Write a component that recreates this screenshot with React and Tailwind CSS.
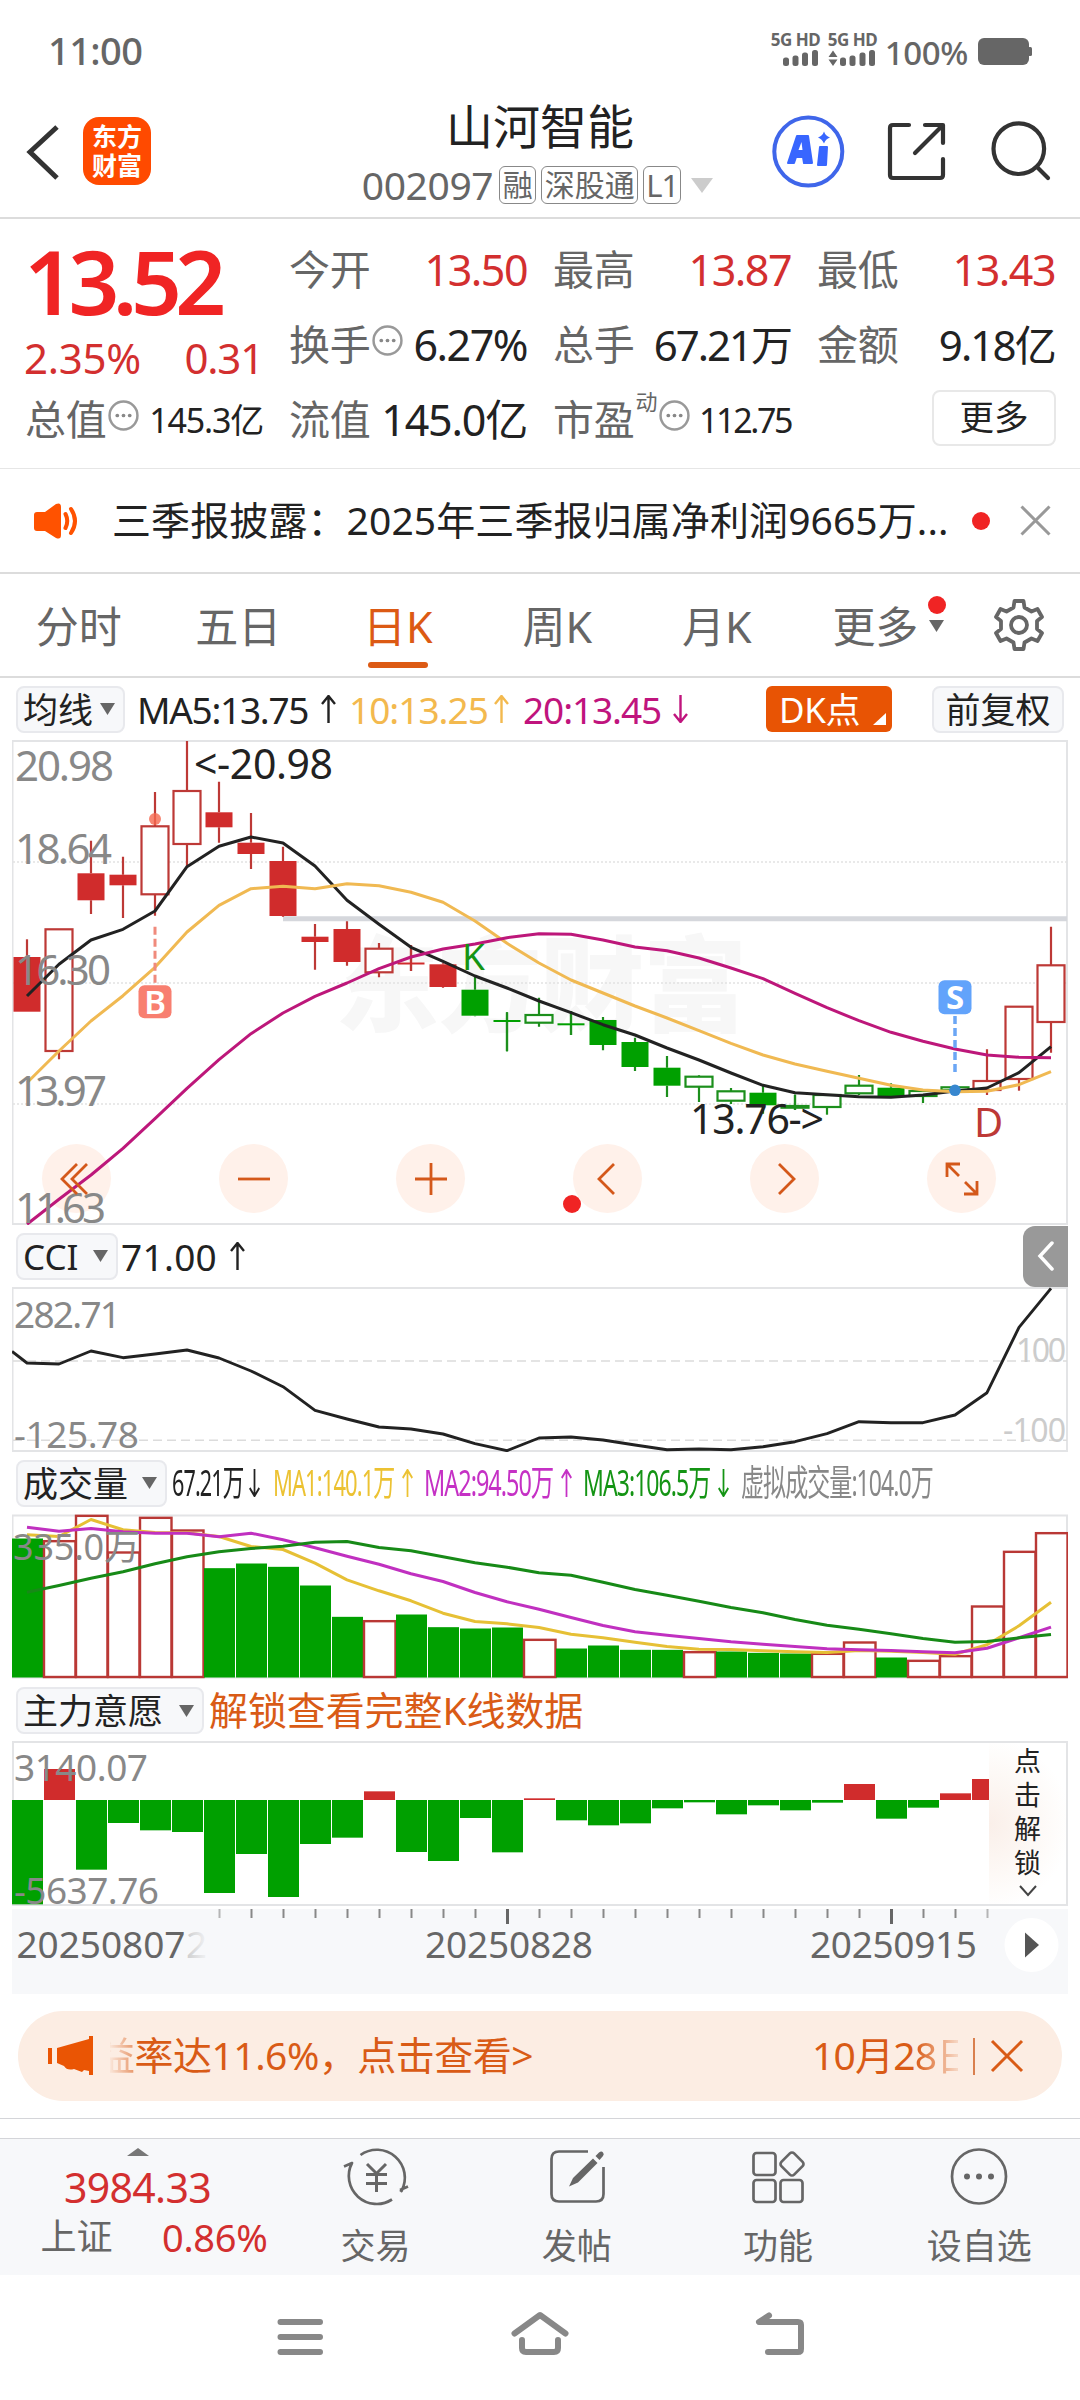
import React from 'react';

// Every chart shares one time axis: 33 trading days, 32px apart
const dayX = (i) => 27 + i * 32;

// [type, body top, body bottom, high, low]
// R = solid red, r = hollow red, G = solid green, g = hollow green
const candles = [
  ['R', 957, 1011.7, 939.3, 1011.7],
  ['r', 929.3, 1051, 929.3, 1059.3],
  ['R', 873.3, 900.3, 840.7, 914],
  ['R', 874.7, 885.3, 856.7, 918],
  ['r', 826.3, 894.3, 792, 915.7],
  ['r', 791, 844, 741, 866],
  ['R', 812.3, 827.3, 781.7, 842.7],
  ['R', 842.7, 854, 813, 869],
  ['R', 861, 916, 846.7, 916.7],
  ['R', 936.7, 942, 924, 969.7],
  ['R', 929, 962, 921.3, 965.7],
  ['r', 948.7, 972.3, 943, 977.3],
  ['R', 962.5, 964.5, 945, 971],
  ['R', 964.3, 987, 963.3, 987.7],
  ['G', 989.7, 1015.7, 975, 1016.3],
  ['G', 1020, 1022, 1012.3, 1051.3],
  ['g', 1015, 1022.7, 997.7, 1026.7],
  ['G', 1023.3, 1025.3, 1011, 1035],
  ['G', 1020, 1045, 1017, 1050.3],
  ['G', 1042, 1067, 1037.7, 1071],
  ['G', 1067.7, 1085.7, 1056, 1097],
  ['g', 1076.7, 1086.7, 1075.3, 1102],
  ['g', 1091.3, 1100.7, 1088, 1104],
  ['G', 1092.7, 1105.3, 1086, 1113.7],
  ['g', 1106, 1107.7, 1094.7, 1110],
  ['g', 1095, 1107, 1095, 1114.7],
  ['g', 1085.7, 1093.3, 1075, 1095],
  ['G', 1087.7, 1096, 1083.3, 1096.7],
  ['g', 1091, 1096, 1091, 1103],
  ['g', 1087.3, 1090.3, 1086.7, 1091],
  ['r', 1081, 1090, 1049.3, 1095],
  ['r', 1006.7, 1079, 1006.7, 1090.7],
  ['r', 965.3, 1022, 926.7, 1052.7],
];

const ma5 = [798, 703, 630, 598, 543, 410, 349, 321, 339, 408, 511, 583, 652, 694, 738, 774, 813, 848, 884, 915, 954, 990, 1029, 1066, 1088, 1094, 1100, 1102, 1095, 1083, 1074, 1028, 950];
const ma10 = [1058, 963, 873, 797, 712, 606, 526, 476, 469, 476, 461, 467, 487, 517, 573, 640, 699, 750, 789, 828, 864, 902, 940, 975, 1002, 1024, 1045, 1066, 1080, 1085, 1084, 1064, 1025];
const ma20 = [1483, 1408, 1335, 1255, 1166, 1075, 989, 911, 849, 799, 759, 716, 681, 657, 642, 623, 611, 613, 630, 651, 662, 684, 714, 746, 790, 833, 872, 907, 934, 957, 975, 982, 983];

const cci = [429, 432, 393, 413, 402, 390, 414, 453, 500, 571, 597, 621, 627, 642, 671, 692, 654, 651, 660, 675, 689, 687, 689, 680, 665, 641, 605, 608, 608, 585, 518, 322, 205];

const volumes = [
  ['g', 114], ['r', 122], ['r', 46], ['r', 156], ['r', 52], ['r', 90], ['g', 203], ['g', 189], ['g', 199], ['g', 255], ['g', 349],
  ['r', 362], ['g', 342], ['g', 380], ['g', 384], ['g', 381], ['r', 418], ['g', 444], ['g', 435], ['g', 448], ['g', 448], ['r', 455],
  ['g', 453], ['g', 457], ['g', 459], ['r', 460], ['r', 426], ['g', 471], ['r', 481], ['r', 467], ['r', 318], ['r', 154], ['r', 98],
];
const volMa1 = [103, 108, 57, 88, 96, 97, 108, 138, 147, 188, 238, 271, 301, 338, 363, 370, 381, 401, 412, 425, 438, 446, 447, 451, 454, 456, 450, 452, 456, 461, 433, 376, 305];
const volMa2 = [80, 92, 84, 94, 98, 98, 109, 98, 118, 142, 167, 191, 220, 243, 276, 304, 326, 351, 375, 394, 404, 414, 424, 431, 438, 445, 448, 450, 454, 457, 443, 412, 380];
const volMa3 = [275, 255, 233, 214, 190, 169, 154, 144, 137, 125, 123, 141, 151, 169, 187, 200, 217, 224, 245, 267, 284, 302, 321, 337, 357, 374, 386, 400, 414, 425, 423, 412, 402];

const intent = [523, 117, 419, 279, 301, 306, 489, 372, 501, 342, 323, 184, 366, 393, 264, 367, 205, 271, 286, 280, 235, 217, 253, 226, 241, 218, 162, 266, 233, 190, 147];

const toPoints = (values, base) => values.map((v, i) => `${dayX(i)},${(base + v / 3).toFixed(1)}`).join(' ');

function Caret() {
  return (
    <svg className="w-[15px] h-[12px] shrink-0" viewBox="0 0 15 12">
      <path d="M0 0H15L7.5 12Z" fill="#666" />
    </svg>
  );
}

function Arrow({ down, narrow }) {
  return (
    <svg className={narrow ? 'w-[11px] h-[28px] shrink-0' : 'w-[15px] h-[28px] shrink-0'} viewBox="0 0 15 28" preserveAspectRatio="none">
      <path
        d={down ? 'M7.5 0V27M1 19L7.5 27L14 19' : 'M7.5 28V1M1 9L7.5 1L14 9'}
        fill="none"
        stroke="currentColor"
        strokeWidth="2.4"
      />
    </svg>
  );
}

function Picker({ label, className }) {
  return (
    <div className={`h-[47px] shrink-0 flex items-center justify-between pl-[5px] pr-[8px] rounded-lg border-2 border-[#e8e9ed] bg-[#f7f8fa] text-[#222] text-[35px] leading-none whitespace-nowrap ${className}`}>
      <span>{label}</span>
      <Caret />
    </div>
  );
}

function Dots() {
  return (
    <svg className="w-[31px] h-[31px] shrink-0" viewBox="0 0 30 30">
      <circle cx="15" cy="15" r="13.5" fill="none" stroke="#999" strokeWidth="2.4" />
      <circle cx="9" cy="15" r="1.8" fill="#888" />
      <circle cx="15" cy="15" r="1.8" fill="#888" />
      <circle cx="21" cy="15" r="1.8" fill="#888" />
    </svg>
  );
}

function StatusBar() {
  return (
    <div className="h-[86px] pl-[48px] pr-[47px] pt-[14px] flex items-center justify-between text-[#666]">
      <span className="text-[38px] font-medium leading-none tracking-[-0.6px]">11:00</span>
      <div className="flex items-center">
        <div className="flex flex-col items-start gap-[4px]">
          <div className="flex gap-[9px] text-[17px] leading-[13px] font-bold tracking-[-0.5px]">
            <span className="w-[48px] whitespace-nowrap">5G HD</span>
            <span className="w-[48px] whitespace-nowrap">5G HD</span>
          </div>
          <svg className="w-[105px] h-[17px]" viewBox="771 51 105 17" fill="#666">
            <rect x="783" y="58.500" width="6" height="8.500" rx="2.500" />
            <rect x="792.500" y="56.500" width="6" height="10.500" rx="2.500" />
            <rect x="802" y="53.500" width="6" height="13.500" rx="2.500" />
            <rect x="812" y="51" width="6" height="16" rx="2.500" />
            <path d="M828.500 58L833 51.500L837.500 58ZM828.500 60.500L833 67L837.500 60.500Z" />
            <rect x="840" y="58.500" width="6" height="8.500" rx="2.500" />
            <rect x="849.500" y="56.500" width="6" height="10.500" rx="2.500" />
            <rect x="859.500" y="53.500" width="6" height="13.500" rx="2.500" />
            <rect x="869" y="51" width="6" height="16" rx="2.500" />
          </svg>
        </div>
        <span className="ml-[9px] mt-[4px] text-[33px] font-medium leading-none tracking-[-0.4px]">100%</span>
        <svg className="ml-[10px] mt-[3px] w-[55px] h-[27px]" viewBox="0 0 55 27">
          <rect width="51" height="27" rx="6" fill="#666" />
          <rect x="50" y="9" width="4" height="9" rx="1.500" fill="#666" />
        </svg>
      </div>
    </div>
  );
}

function Header() {
  return (
    <div className="h-[133px] border-b-2 border-[#dcdcdc] flex">
      <div className="w-[340px] pl-[26px] pt-[31px] flex">
        <svg className="w-[34px] h-[56px] mt-[7px]" viewBox="0 0 34 56">
          <path d="M31 3L4 28L31 54" fill="none" stroke="#333" strokeWidth="5" />
        </svg>
        <div className="ml-[23px] size-[68px] rounded-2xl bg-[#ff4a00] text-white text-[25px] font-bold leading-[29px] flex flex-col items-center justify-center">
          <span>东方</span>
          <span>财富</span>
        </div>
      </div>
      <div className="w-[400px] flex flex-col items-center">
        <h1 className="mt-[15px] text-[47px] leading-[50px] text-[#222]">山河智能</h1>
        <div className="mt-[15px] mr-[5px] h-[38px] flex items-center text-[#666]">
          <span className="-mt-[2px] text-[39px] leading-none tracking-[-0.4px]">002097</span>
          <span className="ml-[6px] h-[38px] w-[37px] rounded-md border-[1.5px] border-[#888] text-[30px] leading-none flex items-center justify-center">融</span>
          <span className="ml-[5px] h-[38px] w-[97px] rounded-md border-[1.5px] border-[#888] text-[30px] leading-none flex items-center justify-center">深股通</span>
          <span className="ml-[5px] h-[38px] w-[38px] rounded-md border-[1.5px] border-[#888] text-[31px] leading-none tracking-[-1px] flex items-center justify-center">L1</span>
          <svg className="ml-[10px] w-[22px] h-[15px]" viewBox="0 0 22 15">
            <path d="M0 0H22L11 15Z" fill="#ccc" />
          </svg>
        </div>
      </div>
      <svg className="w-[340px] h-[120px]" viewBox="740 86 340 120" fill="none">
        <circle cx="808.300" cy="151.600" r="34" stroke="#3f66ea" strokeWidth="4" />
        <path d="M788 163L797 136H808L812 163H804L803 157H796L794 163Z" fill="#3866ff" stroke="#3866ff" strokeWidth="2" strokeLinejoin="round" />
        <path d="M798.500 150H802.500L801.500 142Z" fill="#fff" />
        <path d="M820 147H827L826 165H818Z" fill="#3866ff" stroke="#3866ff" strokeWidth="2" strokeLinejoin="round" />
        <path d="M824 131.500Q825.500 136 830 137.500Q825.500 139 824 143.500Q822 139 818 137.500Q822.500 136 824 131.500Z" fill="#3866ff" />
        <g stroke="#333" strokeWidth="4.200" strokeLinecap="round" strokeLinejoin="round">
          <path d="M909 125H893Q890 125 890 128V175Q890 178 893 178H940Q943 178 943 175V159" />
          <path d="M925 125H943V143M942 126L915 153" />
          <circle cx="1018.800" cy="148.700" r="25.300" />
          <path d="M1037 167L1048 178" />
        </g>
      </svg>
    </div>
  );
}

function Stat({ label, mark, dots, value, valueClass }) {
  return (
    <div className="h-[75px] flex items-center justify-between whitespace-nowrap">
      <div className="flex items-center text-[#666] text-[41px] leading-none tracking-[-0.3px]">
        <span>{label}</span>
        {mark && <span className="ml-[1px] -mt-[38px] text-[22px] leading-none">{mark}</span>}
        {dots && <span className="ml-[2px] -mt-[8px]"><Dots /></span>}
      </div>
      <span className={`leading-none ${valueClass}`}>{value}</span>
    </div>
  );
}

function Quote() {
  return (
    <div className="h-[250px] border-b border-[#e6e6e6] pt-[13px] pl-[25px] pr-[25px] flex justify-between">
      <div className="w-[238px]">
        <div className="h-[150px] text-[#f02424]">
          <div className="h-[92px] pt-[3px] text-[89px] leading-[92px] font-semibold tracking-[-6.5px] -ml-[1px]">13.52</div>
          <div className="flex justify-between mt-[11px] text-[42px] leading-[46px] text-[#d32f2f]">
            <span className="-ml-[1px] tracking-[-0.3px]">2.35%</span>
            <span className="tracking-[-1.2px]">0.31</span>
          </div>
        </div>
        <Stat label="总值" dots value="145.3亿" valueClass="text-[34px] tracking-[-1.2px] text-[#222]" />
      </div>
      <div className="w-[238px]">
        <Stat label="今开" value="13.50" valueClass="text-[43px] tracking-[-1.5px] text-[#d32f2f]" />
        <Stat label="换手" dots value="6.27%" valueClass="text-[43px] tracking-[-1.5px] text-[#222]" />
        <Stat label="流值" value="145.0亿" valueClass="text-[43px] tracking-[-1.2px] text-[#222]" />
      </div>
      <div className="w-[238px]">
        <Stat label="最高" value="13.87" valueClass="text-[43px] tracking-[-1.5px] text-[#d32f2f]" />
        <Stat label="总手" value="67.21万" valueClass="text-[42px] tracking-[-2px] text-[#222]" />
        <Stat label="市盈" mark="动" dots value="112.75" valueClass="text-[34px] tracking-[-2.4px] text-[#222]" />
      </div>
      <div className="w-[238px]">
        <Stat label="最低" value="13.43" valueClass="text-[43px] tracking-[-1.5px] text-[#d32f2f]" />
        <Stat label="金额" value="9.18亿" valueClass="text-[42px] tracking-[-1.8px] text-[#222]" />
        <div className="h-[75px] flex items-center justify-end">
          <button className="-mt-[4px] -mr-[1px] w-[124px] h-[56px] rounded-lg border-2 border-[#e8e8e8] text-[34.5px] leading-none text-[#222]">更多</button>
        </div>
      </div>
    </div>
  );
}

function News() {
  return (
    <div className="h-[105px] border-b-2 border-[#dcdcdc] flex items-center">
      <svg className="ml-[33px] w-[46px] h-[38px]" viewBox="33 501 46 38">
        <path d="M34 514Q34 511 37 511H45L56 503Q61 501 61 506V534Q61 539 56 537L45 530H37Q34 530 34 527Z" fill="#ff5200" />
        <path d="M65.500 513Q69 520 65.500 527M71 508Q79 520 71 532" fill="none" stroke="#ff5200" strokeWidth="4" strokeLinecap="round" />
      </svg>
      <span className="ml-[33px] -mt-[2px] w-[836px] text-[39px] leading-none tracking-[0.1px] text-[#222] whitespace-nowrap">三季报披露：2025年三季报归属净利润9665万...</span>
      <span className="ml-[24px] size-[18px] rounded-full bg-[#f02424]" />
      <svg className="ml-[30px] w-[31px] h-[31px]" viewBox="0 0 31 31">
        <path d="M1.500 1.500L29.500 29.500M29.500 1.500L1.500 29.500" stroke="#999" strokeWidth="3" />
      </svg>
    </div>
  );
}

function Tabs() {
  const tabs = ['分时', '五日', '日K', '周K', '月K'];
  return (
    <div className="h-[104px] border-b-2 border-[#dcdcdc] flex text-[43px] leading-none text-[#666]">
      {tabs.map((tab) => (
        <div key={tab} className={`w-[159.5px] flex flex-col items-center pt-[31px] pr-[2px] ${tab === '日K' ? 'text-[#dc5a14]' : ''}`}>
          <span>{tab}</span>
          {tab === '日K' && <span className="mt-[14px] w-[60px] h-[6px] rounded-full bg-[#dc5a14]" />}
        </div>
      ))}
      <div className="w-[160px] pt-[31px] pl-[35px] flex items-start">
        <span className="tracking-[-0.3px]">更多</span>
        <div className="ml-[10px] -mt-[9px] flex flex-col items-center gap-[6px]">
          <span className="size-[18px] rounded-full bg-[#f02424]" />
          <Caret />
        </div>
      </div>
      <svg className="ml-[34px] mt-[24px] w-[54px] h-[54px]" viewBox="0 0 54 54" fill="none" stroke="#666" strokeWidth="3.800" strokeLinejoin="round">
        <path d="M22.500 3H31.500L32.500 9.500L39.500 13.500L45.500 11L50 19L45 23V31L50 35L45.500 43L39.500 40.500L32.500 44.500L31.500 51H22.500L21.500 44.500L14.500 40.500L8.500 43L4 35L9 31V23L4 19L8.500 11L14.500 13.500L21.500 9.500Z" />
        <circle cx="27" cy="27" r="8" />
      </svg>
    </div>
  );
}

function MaRow() {
  return (
    <div className="h-[62px] pl-[16px] pr-[16px] flex items-center text-[37px] leading-none whitespace-nowrap">
      <Picker label="均线" className="w-[109px]" />
      <div className="ml-[12px] w-[199px] flex items-center justify-between text-[#222]">
        <span className="tracking-[-1.3px]">MA5:13.75</span>
        <Arrow />
      </div>
      <div className="ml-[13px] w-[160px] flex items-center justify-between text-[#f3b94e]">
        <span className="tracking-[-1px]">10:13.25</span>
        <Arrow />
      </div>
      <div className="ml-[14px] w-[165px] flex items-center justify-between text-[#c0147d]">
        <span className="tracking-[-1.1px]">20:13.45</span>
        <Arrow down />
      </div>
      <div className="ml-auto w-[126px] h-[46px] rounded-md bg-[#e85404] text-white flex items-center pl-[13px]">
        <span className="text-[35px] tracking-[-0.3px]">DK点</span>
        <svg className="ml-auto mr-[6px] mt-[20px] w-[13px] h-[12px]" viewBox="0 0 13 12">
          <path d="M13 0V12H0Z" fill="#fff" />
        </svg>
      </div>
      <div className="ml-[40px] w-[132px] h-[47px] rounded-lg border-2 border-[#e8e9ed] bg-[#f7f8fa] text-[#222] text-[35px] flex items-center justify-center">前复权</div>
    </div>
  );
}

function Candle({ data, x }) {
  const [type, top, bottom, high, low] = data;
  const solid = type === 'R' || type === 'G';
  const red = type === 'R' || type === 'r';
  const line = red ? '#bd3936' : '#1c8f1c';
  return (
    <g>
      <path d={`M${x} ${high}V${top}M${x} ${bottom}V${low}`} stroke={line} strokeWidth="2.2" />
      {bottom - top < 2.5 && <path d={`M${x} ${high}V${low}`} stroke={line} strokeWidth="2.2" />}
      {solid ? (
        <rect x={x - 13.5} y={top} width="27" height={bottom - top} fill={red ? '#d02c2c' : '#00a000'} />
      ) : (
        <rect x={x - 13.5} y={top} width="27" height={bottom - top} fill="#fff" stroke={line} strokeWidth="2.2" />
      )}
    </g>
  );
}

function RoundButton({ children }) {
  return (
    <button className="size-[69px] rounded-full flex items-center justify-center">
      <svg className="w-[40px] h-[40px]" viewBox="0 0 40 40" fill="none" stroke="#d4581a" strokeWidth="2.8">
        {children}
      </svg>
    </button>
  );
}

function PriceChart() {
  const labels = [['20.98', 780.7, 99], ['18.64', 864, 97], ['16.30', 985, 96], ['13.97', 1105.7, 92], ['11.63', 1222.7, 91]];
  return (
    <div className="relative h-[485px] w-[1056px] mx-[12px]">
      <svg className="w-[1056px] h-[485px]" viewBox="12 740 1056 485">
        <rect x="12.500" y="741" width="1054.500" height="483" fill="none" stroke="#e3e4e6" strokeWidth="2" />
        <text x="335" y="1024" fontSize="104" fontWeight="900" fill="#f7f7f7" textLength="412">东方财富</text>
        {[862, 983, 1104].map((y) => (
          <path key={y} d={`M13 ${y}H1067`} stroke="#e2e2e2" strokeWidth="1.500" strokeDasharray="2 2" />
        ))}
        {/* Discs behind the six chart controls */}
        {[76.5, 253.5, 430.5, 607.5, 784.5, 961.5].map((x) => (
          <circle key={x} cx={x} cy="1178.500" r="34.500" fill="#fff1ea" />
        ))}
        <path d="M283 918.700H1067" stroke="#d5d7dc" strokeWidth="5" />
        {candles.map((c, i) => <Candle key={i} data={c} x={dayX(i)} />)}
        <g fill="none" strokeWidth="3" strokeLinejoin="round">
          <polyline points={toPoints(ma5, 730)} stroke="#222" />
          <polyline points={toPoints(ma10, 730)} stroke="#f0b952" />
          <polyline points={toPoints(ma20, 730)} stroke="#bd177a" />
        </g>
        <g fontSize="42" fill="#888">
          {labels.map(([text, y, w]) => <text key={text} x="15" y={y} textLength={w}>{text}</text>)}
        </g>
        <g fontSize="41">
          <text x="194" y="778.700" fill="#222" textLength="139">&lt;-20.98</text>
          <text x="690" y="1134" fill="#222" textLength="134">13.76-&gt;</text>
          <text x="462" y="969.500" fontSize="37" fill="#149414">K</text>
          <text x="974" y="1136.700" fontSize="40" fill="#bd3936">D</text>
        </g>
        <path d="M155 926.700V983" stroke="#f08a7c" strokeWidth="3" strokeDasharray="8 4" />
        <circle cx="155" cy="819" r="6" fill="#f5684f" fillOpacity="0.8" />
        <rect x="138.500" y="985.300" width="33" height="33" rx="6" fill="#f87f70" />
        <text x="155" y="1013.500" fontSize="33" fontWeight="600" fill="#fff" textAnchor="middle">B</text>
        <path d="M955 1016V1072" stroke="#6ba6f5" strokeWidth="3.500" strokeDasharray="8 4" />
        <circle cx="955" cy="1090.300" r="5.800" fill="#3787cf" />
        <rect x="938.500" y="980.300" width="33" height="34" rx="6" fill="#62a3fb" />
        <text x="955" y="1009" fontSize="33" fontWeight="700" fill="#fff" textAnchor="middle">S</text>
      </svg>
      {/* Zoom and pan controls float over the candles */}
      <div className="absolute left-[30px] top-[404px] w-[954px] flex justify-between">
        <RoundButton><path d="M20 5L5 20L20 35M30 5L15 20L30 35" /></RoundButton>
        <RoundButton><path d="M4 20H36" /></RoundButton>
        <RoundButton><path d="M4 20H36M20 4V36" /></RoundButton>
        <RoundButton><path d="M26 5L11 20L26 35" /></RoundButton>
        <RoundButton><path d="M14 5L29 20L14 35" /></RoundButton>
        <RoundButton><path d="M18 5H5V18M5 5L17 17M22 35H35V22M35 35L23 23" /></RoundButton>
      </div>
      <span className="absolute left-[551px] top-[455px] size-[18px] rounded-full bg-[#f02424]" />
    </div>
  );
}

function CciPanel() {
  return (
    <div>
      <div className="h-[62px] pl-[16px] pr-[12px] flex items-center text-[37px] leading-none text-[#222]">
        <Picker label="CCI" className="w-[102px]" />
        <span className="ml-[3px] w-[109px] tracking-[0.3px]">71.00</span>
        <Arrow />
        <div className="ml-auto w-[45px] h-[61px] rounded-l-xl bg-[#999] flex items-center justify-center">
          <svg className="w-[20px] h-[30px]" viewBox="0 0 20 30">
            <path d="M16 2L4 15L16 28" fill="none" stroke="#fff" strokeWidth="3.500" strokeLinecap="round" />
          </svg>
        </div>
      </div>
      <svg className="w-[1056px] h-[165px] mx-[12px]" viewBox="12 1287 1056 165">
        <rect x="12.500" y="1288" width="1054.500" height="163" fill="none" stroke="#e3e4e6" strokeWidth="2" />
        <path d="M13 1361H1067M13 1440.300H1067" stroke="#dcdcdc" strokeWidth="1.500" strokeDasharray="9 5" />
        <g fontSize="32" fill="#ccc">
          <text x="1016" y="1362" textLength="50">100</text>
          <text x="1003" y="1442" textLength="63">-100</text>
        </g>
        <g fontSize="37" fill="#888">
          <text x="14" y="1328" textLength="107">282.71</text>
          <text x="14" y="1448" textLength="125">-125.78</text>
        </g>
        <polyline points={`12,1351.500 ${toPoints(cci, 1220)}`} fill="none" stroke="#222" strokeWidth="2.900" strokeLinejoin="round" />
      </svg>
    </div>
  );
}

// Squeezed label so the whole legend fits on one line
function Narrow({ children, className, scale }) {
  return (
    <span className={`shrink-0 ${className}`}>
      <span className={`inline-block origin-left tracking-[-1.5px] ${scale}`}>{children}</span>
    </span>
  );
}

function VolumePanel() {
  return (
    <div>
      <div className="h-[62px] pl-[16px] flex items-center text-[36px] leading-none text-[#222] whitespace-nowrap">
        <Picker label="成交量" className="w-[151px]" />
        <Narrow className="ml-[5px] w-[77px]" scale="scale-x-[0.6]">67.21万</Narrow>
        <Arrow down narrow />
        <div className="ml-[13px] flex items-center text-[#ecc232]">
          <Narrow className="w-[129px]" scale="scale-x-[0.61]">MA1:140.1万</Narrow>
          <Arrow narrow />
        </div>
        <div className="ml-[11px] flex items-center text-[#c531c5]">
          <Narrow className="w-[137px]" scale="scale-x-[0.65]">MA2:94.50万</Narrow>
          <Arrow narrow />
        </div>
        <div className="ml-[11px] flex items-center text-[#149414]">
          <Narrow className="w-[135px]" scale="scale-x-[0.64]">MA3:106.5万</Narrow>
          <Arrow down narrow />
        </div>
        <div className="ml-[12px] text-[#888]">
          <Narrow className="w-[190px]" scale="scale-x-[0.64]">虚拟成交量:104.0万</Narrow>
        </div>
      </div>
      <svg className="w-[1056px] h-[166px] mx-[12px]" viewBox="12 1513.5 1056 166">
        <rect x="12.500" y="1515" width="1054.500" height="162" fill="none" stroke="#e3e4e6" strokeWidth="2" />
        {volumes.map(([type, z], i) => {
          const top = 1500 + z / 3;
          return type === 'g' ? (
            <rect key={i} x={12 + i * 32} y={top} width="31" height={1677 - top} fill="#00a000" />
          ) : (
            <rect key={i} x={12 + i * 32} y={top} width="31.500" height={1676.5 - top} fill="#fff" stroke="#b93835" strokeWidth="2.400" />
          );
        })}
        <g fill="none" strokeWidth="3" strokeLinejoin="round">
          <polyline points={toPoints(volMa1, 1500)} stroke="#e6c035" />
          <polyline points={toPoints(volMa2, 1500)} stroke="#c030c0" />
          <polyline points={toPoints(volMa3, 1500)} stroke="#178a17" />
        </g>
        <text x="13" y="1559.500" fontSize="36" fill="#888" textLength="127">335.0万</text>
      </svg>
    </div>
  );
}

function IntentPanel() {
  return (
    <div>
      <div className="h-[61px] pl-[16px] flex items-center leading-none whitespace-nowrap">
        <Picker label="主力意愿" className="w-[188px]" />
        <span className="ml-[5px] -mt-[2px] text-[39px] text-[#d95b16] tracking-[-0.1px]">解锁查看完整K线数据</span>
      </div>
      <div className="flex mx-[12px] h-[165px]">
        <svg className="w-[977px] h-[165px]" viewBox="12 1741 977 165">
          <path d="M989 1742H13V1905H989" fill="none" stroke="#e3e4e6" strokeWidth="2" />
          {intent.map((z, i) => {
            const y = 1730 + z / 3;
            const up = z < 210;
            return <rect key={i} x={12 + i * 32} y={up ? y : 1800} width="31" height={Math.abs(1800 - y)} fill={up ? '#d02c2c' : '#00a000'} />;
          })}
          <g fontSize="37" fill="#888">
            <text x="14" y="1781" textLength="134">3140.07</text>
            <text x="14" y="1903.500" textLength="145">-5637.76</text>
          </g>
        </svg>
        <div className="w-[79px] h-[165px] border-y-2 border-r-2 border-[#e3e4e6] bg-[radial-gradient(ellipse_at_left,#faefe9_0%,#fdf9f6_45%,#fff_75%)] flex flex-col items-center pt-[1px] text-[27px] leading-[34px] text-[#222]">
          <span>点</span>
          <span>击</span>
          <span>解</span>
          <span>锁</span>
          <svg className="mt-[4px] w-[20px] h-[14px]" viewBox="0 0 20 14">
            <path d="M2 2L10 11L18 2" fill="none" stroke="#444" strokeWidth="2" />
          </svg>
        </div>
      </div>
    </div>
  );
}

function TimeAxis() {
  const ticks = Array.from({ length: 25 }, (_, k) => k + 6);
  return (
    <svg className="w-[1056px] h-[85px] mx-[12px] mt-[3px]" viewBox="12 1909 1056 85">
      <defs>
        <linearGradient id="axisFade" x1="0" x2="1">
          <stop offset="0" stopColor="#f7f8fa" stopOpacity="0.4" />
          <stop offset="1" stopColor="#f7f8fa" />
        </linearGradient>
      </defs>
      <rect x="12" y="1909" width="1056" height="85" fill="#f7f8fa" />
      {ticks.map((i) => {
        const major = i === 15 || i === 27;
        return (
          <path
            key={i}
            d={`M${dayX(i) + 0.5} 1909V${major ? 1924 : 1918}`}
            stroke={major ? '#666' : '#888'}
            strokeWidth={major ? 3 : 2}
            strokeOpacity={i === 6 || i === 30 ? 0.6 : 1}
          />
        );
      })}
      <g fontSize="37" fill="#666">
        <text x="16.500" y="1958" textLength="169">20250807</text>
        <text x="186" y="1958" fill="#aaa">2</text>
        <rect x="184" y="1925" width="26" height="40" fill="url(#axisFade)" />
        <text x="425" y="1958" textLength="168">20250828</text>
        <text x="810" y="1958" textLength="167">20250915</text>
      </g>
      <circle cx="1031.500" cy="1945" r="27" fill="#fff" />
      <path d="M1025 1932.500V1957.500L1039 1945Z" fill="#555" />
    </svg>
  );
}

function Banner() {
  return (
    <div className="mt-[17px] mx-[18px] h-[90px] rounded-full bg-[#fcede3] flex items-center text-[39px] leading-none text-[#d95b16] whitespace-nowrap">
      <svg className="ml-[29px] w-[46px] h-[40px] shrink-0" viewBox="47 2036 46 40" fill="#ea5504">
        <path d="M48 2048H52V2064H48ZM57 2048L89 2039V2036H93V2075H89V2071L84 2070L82 2072L74 2069Q67 2071 64 2066L57 2063Z" />
      </svg>
      <div className="ml-[17px] -mt-[3px] w-[570px] h-[50px] overflow-hidden flex items-center">
        <div className="-ml-[14px] flex tracking-[-0.5px]">
          <span className="bg-linear-to-r from-[#d95b16]/0 from-30% to-[#d95b16]/60 bg-clip-text text-transparent">益</span>
          <span>率达11.6%，点击查看&gt;</span>
        </div>
      </div>
      <div className="ml-[132px] -mt-[3px] w-[146px] flex overflow-hidden tracking-[-0.8px] h-[50px] items-center">
        <span>10月2</span>
        <span className="bg-linear-to-r from-[#d95b16] to-[#d95b16]/0 to-85% bg-clip-text text-transparent leading-[50px]">8日</span>
      </div>
      <span className="ml-[15px] w-[2px] h-[37px] bg-[#d9804f]" />
      <svg className="ml-[15px] w-[34px] h-[34px] shrink-0" viewBox="0 0 34 34">
        <path d="M2 2L32 32M32 2L2 32" stroke="#d95b16" strokeWidth="3" />
      </svg>
    </div>
  );
}

function Action({ label, children }) {
  return (
    <div className="w-[201.25px] flex flex-col items-center text-[#666]">
      <svg className="mt-[5px] w-[70px] h-[64px]" viewBox="0 0 70 64" fill="none" stroke="#666" strokeWidth="2.700">
        {children}
      </svg>
      <span className="mt-[20px] text-[35px] leading-none">{label}</span>
    </div>
  );
}

function BottomBar() {
  return (
    <div className="mt-[17px] border-t border-[#d4d5d9]">
      <div className="mt-[19px] h-[137px] border-t border-[#d4d5d9] bg-[#f7f8fa] flex">
        <div className="w-[275px] flex flex-col items-center">
          <svg className="mt-[9px] w-[22px] h-[8px]" viewBox="0 0 22 8">
            <path d="M0 8L11 0L22 8Z" fill="#777" />
          </svg>
          <span className="mt-[10px] text-[41px] leading-[42px] text-[#d32f2f] tracking-[-0.7px]">3984.33</span>
          <div className="mt-[10px] ml-[33px] w-[227px] flex items-center justify-between leading-[38px]">
            <span className="text-[36px] text-[#666]">上证</span>
            <span className="text-[38px] text-[#d32f2f] tracking-[-0.3px]">0.86%</span>
          </div>
        </div>
        <Action label="交易">
          <path d="M19.500 11A28 28 0 0 1 60.500 47L59 46M59 46L67 42.500M51 55.500A28 28 0 0 1 11 19L3 22.500" strokeLinejoin="round" />
          <path d="M26 20L35.500 29.500L45 20M25 30.500H46M25 39.500H46M35.500 30V48" strokeWidth="3" />
        </Action>
        <Action label="发帖">
          <path d="M46 7.500H17Q9.500 7.500 9.500 15V50Q9.500 57.500 17 57.500H54Q61.500 57.500 61.500 50V23" />
          <path d="M27 42.500L31 34L51 14.500L55.500 19L36 38.500ZM53.500 12L57 8.500Q59.500 6.500 61 8.500Q62.500 10 61 12L57.500 16Z" fill="#666" stroke="none" />
        </Action>
        <Action label="功能">
          <rect x="10.500" y="9" width="22" height="22" rx="3" />
          <rect x="10.500" y="36" width="22" height="22" rx="3" />
          <rect x="37.500" y="36" width="22" height="22" rx="3" />
          <rect x="40" y="11" width="18" height="18" rx="3" transform="rotate(45 49 20)" />
        </Action>
        <Action label="设自选">
          <circle cx="35" cy="32.500" r="27" />
          <g fill="#666" stroke="none">
            <circle cx="23" cy="32.500" r="3" />
            <circle cx="35" cy="32.500" r="3" />
            <circle cx="47" cy="32.500" r="3" />
          </g>
        </Action>
      </div>
    </div>
  );
}

function SystemNav() {
  return (
    <div className="h-[125px] flex justify-between items-start pt-[34px] pl-[265px] pr-[265px]">
      <svg className="w-[70px] h-[50px]" viewBox="265 2309 70 50" stroke="#888" strokeWidth="6" strokeLinecap="round">
        <path d="M280.500 2322H320M280.500 2337H320M280.500 2352H320" />
      </svg>
      <svg className="w-[70px] h-[50px]" viewBox="505 2309 70 50" fill="none" stroke="#888" strokeWidth="6" strokeLinecap="round" strokeLinejoin="round">
        <path d="M514.500 2333.500L540 2315L565.500 2333.500" />
        <path d="M522 2340V2348Q522 2352 526 2352H554Q558 2352 558 2348V2340" />
      </svg>
      <svg className="w-[70px] h-[50px]" viewBox="745 2309 70 50" fill="none" stroke="#888" strokeWidth="6" strokeLinecap="round" strokeLinejoin="round">
        <path d="M769 2315.500L759 2322H798Q801 2322 801 2325V2349Q801 2352 798 2352H768" />
      </svg>
    </div>
  );
}

export default function App() {
  return (
    <div className="w-[1080px] h-[2400px] overflow-hidden bg-white font-['Noto_Sans','Noto_Sans_CJK_SC',sans-serif]">
      <StatusBar />
      <Header />
      <Quote />
      <News />
      <Tabs />
      <MaRow />
      <PriceChart />
      <CciPanel />
      <VolumePanel />
      <IntentPanel />
      <TimeAxis />
      <Banner />
      <BottomBar />
      <SystemNav />
    </div>
  );
}
